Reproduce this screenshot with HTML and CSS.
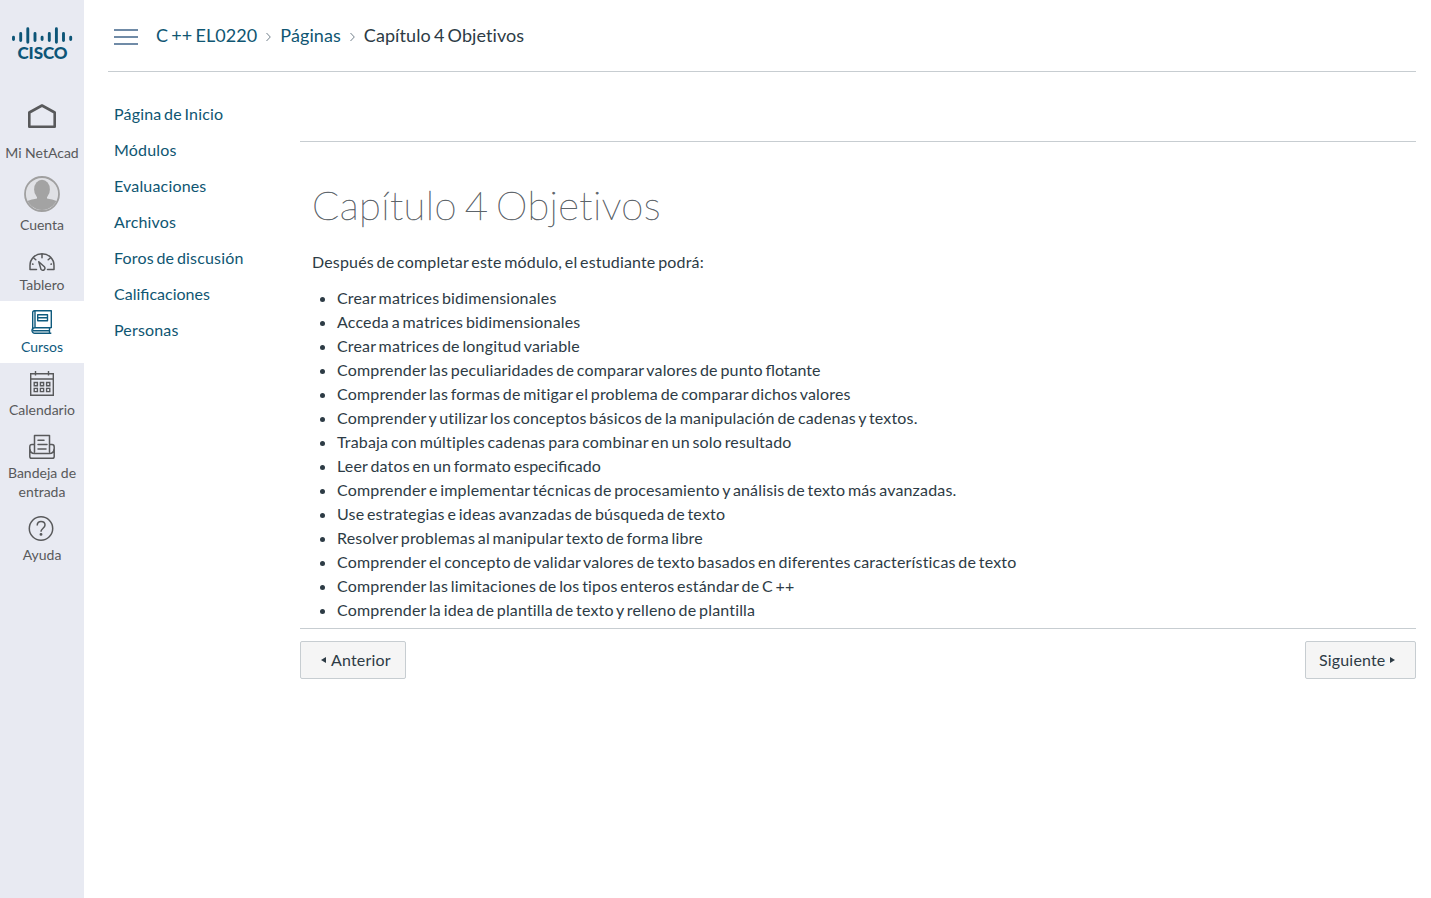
FILE: index.html
```html
<!DOCTYPE html>
<html lang="es">
<head>
<meta charset="utf-8">
<title>Capítulo 4 Objetivos</title>
<link rel="stylesheet" href="styles.css">
</head>
<body>
<div class="app">
  <nav class="rail">
    <a class="brand">
      <svg width="84" height="60" viewBox="0 10 84 60" role="img" aria-label="Cisco">
        <g stroke="#0d5577" stroke-width="2.900" stroke-linecap="round">
          <path d="M13.500 37.300v2.200M20.700 33.500v7M27.800 28.700v13.500M35 33.500v7M42.100 37.300v2.200M49.300 33.500v7M56.400 28.700v13.500M63.500 33.500v7M70.700 37.300v2.200"/>
        </g>
        <text class="brand-name" x="17.500" y="58.500" textLength="50" lengthAdjust="spacing">CISCO</text>
      </svg>
    </a>
    <a class="item home">
      <svg width="30" height="26" viewBox="0 0 30 26" fill="none" stroke="#58595b" stroke-width="2.600" stroke-linejoin="round"><path d="M2.300 9.500 15 2.500l12.700 7v14.200H2.300z"/></svg>
      <span>Mi NetAcad</span>
    </a>
    <a class="item account">
      <svg width="36" height="36" viewBox="0 0 36 36">
        <clipPath id="disc"><circle cx="18" cy="18" r="16"/></clipPath>
        <circle cx="18" cy="18" r="17" fill="#e0e1e5" stroke="#a0a0a0" stroke-width="1.800"/>
        <g fill="#a3a3a3" clip-path="url(#disc)"><ellipse cx="18" cy="13.400" rx="7.900" ry="9.600"/><path d="M13 19h10v3.500c3 1 10 1 13 5.500v8H0v-8c3-4.500 10-4.500 13-5.500z"/></g>
      </svg>
      <span>Cuenta</span>
    </a>
    <a class="item">
      <svg width="26" height="26" viewBox="0 -2 26 26" fill="none" stroke="#58595b" stroke-width="1.500" stroke-linecap="round" stroke-linejoin="round"><path d="M7.500 21.500H1v-4a12 11.800 0 0 1 24 0v4h-6.500M13 6.200v3.500M5.300 10.500l1.500 1.300M20.700 10.500l-1.500 1.300M3.500 16l.5.200M22.500 16l-.5.200M9.800 13.800l5.600 5c1.900 2.200-1.500 5-3.400 2.600z"/></svg>
      <span>Tablero</span>
    </a>
    <a class="item active">
      <svg width="26" height="26" viewBox="0 0 26 26" fill="none" stroke="#0f5a7d" stroke-width="1.400" stroke-linejoin="round"><path d="M3.700 21.500V3.500Q3.700 1.700 5.500 1.700H22.300V19M22.300 18.700H5.800a2.800 2.800 0 0 0 0 5.600H22.300M6 1.700V18.700M4 21.700H21M20.500 19v5M8.700 5.700h9.800v6H8.700zM9 8.700h9.500"/></svg>
      <span>Cursos</span>
    </a>
    <a class="item">
      <svg width="26" height="26" viewBox="0 0 26 26" fill="none" stroke="#58595b" stroke-width="1.400"><path d="M1.700 2.800h22.600v21.500H1.700zM2 8h22M6.500 0v4.500M19.500 0v4.500M5.200 11.500h3.200v3.200H5.200zM11.400 11.500h3.200v3.200h-3.200zM17.600 11.500h3.200v3.200h-3.200zM5.200 17.400h3.200v3.200H5.200zM11.400 17.400h3.200v3.200h-3.200zM17.600 17.400h3.200v3.200h-3.200z"/></svg>
      <span>Calendario</span>
    </a>
    <a class="item">
      <svg width="26" height="26" viewBox="0 0 26 26" fill="none" stroke="#58595b" stroke-width="1.500" stroke-linecap="round" stroke-linejoin="round"><path d="M5.500 18V1.500h15V18M5.300 10.500H3Q.8 10.500.8 13v9.500q0 1.800 1.800 1.800h20.800q1.800 0 1.800-1.800V13q0-2.500-2.200-2.500h-2.300M1 15q.2 4.500 4.500 4.500h15Q24.800 19.500 25 15M9 6.200h6M9 10.600h9M9 15h8"/></svg>
      <span>Bandeja de<br>entrada</span>
    </a>
    <a class="item help">
      <svg width="26" height="26" viewBox="0 0 26 26" fill="none" stroke="#58595b" stroke-width="1.500"><circle cx="13" cy="12.500" r="11.700"/><path d="M9.200 9.400C9.200 6.600 10.900 5.400 13 5.400s4 1.300 4 3.600c0 3.200-4 3.300-4 6.800"/><circle cx="13" cy="18.400" r=".7" fill="#58595b"/></svg>
      <span>Ayuda</span>
    </a>
  </nav>
  <div class="page">
    <header class="topbar">
      <svg class="burger" width="24" height="16" viewBox="0 0 24 16" stroke="#41658a" stroke-width="1.700"><path d="M0 1h24M0 8h24M0 15h24"/></svg>
      <div class="crumbs">
        <a>C ++ EL0220</a>
        <svg width="7" height="10" viewBox="0 0 7 10"><path d="M1.500 1 5.300 5 1.500 9"/></svg>
        <a>Páginas</a>
        <svg width="7" height="10" viewBox="0 0 7 10"><path d="M1.500 1 5.300 5 1.500 9"/></svg>
        <span>Capítulo 4 Objetivos</span>
      </div>
    </header>
    <div class="columns">
      <nav class="course-nav">
        <a>Página de Inicio</a><a>Módulos</a><a>Evaluaciones</a><a>Archivos</a><a>Foros de discusión</a><a class="liga">Calificaciones</a><a>Personas</a>
      </nav>
      <main class="content">
        <article class="article">
          <h1>Capítulo 4 Objetivos</h1>
          <p>Después de completar este módulo, el estudiante podrá:</p>
          <ul>
            <li>Crear matrices bidimensionales</li>
            <li>Acceda a matrices bidimensionales</li>
            <li>Crear matrices de longitud variable</li>
            <li>Comprender las peculiaridades de comparar valores de punto <span class="liga">flotante</span></li>
            <li>Comprender las formas de mitigar el problema de comparar dichos valores</li>
            <li>Comprender y utilizar los conceptos básicos de la manipulación de cadenas y textos.</li>
            <li>Trabaja con múltiples cadenas para combinar en un solo resultado</li>
            <li>Leer datos en un formato <span class="liga">especificado</span></li>
            <li>Comprender e implementar técnicas de procesamiento y análisis de texto más avanzadas.</li>
            <li>Use estrategias e ideas avanzadas de búsqueda de texto</li>
            <li>Resolver problemas al manipular texto de forma libre</li>
            <li>Comprender el concepto de validar valores de texto basados en diferentes características de texto</li>
            <li>Comprender las limitaciones de los tipos enteros estándar de C ++</li>
            <li>Comprender la idea de plantilla de texto y relleno de plantilla</li>
          </ul>
        </article>
        <footer class="pager">
          <a class="btn prev"><svg width="5" height="6" viewBox="0 0 5 6"><path d="M5 0v6L0 3z"/></svg>Anterior</a>
          <a class="btn next">Siguiente<svg width="5" height="6" viewBox="0 0 5 6"><path d="M0 0v6l5-3z"/></svg></a>
        </footer>
      </main>
    </div>
  </div>
</div>
</body>
</html>
```
FILE: styles.css
```css
* { box-sizing: border-box; }
body { margin: 0; background: #fff; color: #2d3b45; font: 16px/24px Lato, sans-serif; font-variant-ligatures: none; }
.app { display: flex; min-height: 898px; }
.rail { width: 84px; flex: none; background: #e8eaf2; display: flex; flex-direction: column; }
.brand { height: 85px; padding-top: 10px; }
.brand svg { display: block; }
.brand-name { font: 900 17px Lato, sans-serif; fill: #0d5577; }
.item { display: flex; flex-direction: column; align-items: center; gap: 3px; padding: 8px 0 7px; font-size: 14px; line-height: 19px; text-align: center; color: #58595b; }
.item svg { display: block; flex: none; }
.home { height: 83px; padding-top: 18px; gap: 14px; }
.account { height: 70px; }
.active { height: 62px; margin-top: 1px; padding-bottom: 6px; gap: 2px; background: #fff; color: #0f5a7d; }
.rail .account + .item { height: 62px; }
.help svg { margin-right: 2px; }
.page { flex: 1; padding: 0 15px 0 24px; letter-spacing: 0.17px; word-spacing: -1.55px; }
.topbar { height: 72px; padding: 0 0 0 6px; border-bottom: 1px solid #c7cdd1; display: flex; align-items: center; gap: 18px; }
.burger { margin-top: 2px; }
.crumbs { display: flex; align-items: center; gap: 8px; margin-top: -2px; font-size: 18px; letter-spacing: 0.08px; }
.crumbs svg { margin-top: 5px; fill: none; stroke: #73818c; stroke-width: 1; }
.crumbs a, .course-nav a { color: #0f5672; }
.columns { display: flex; }
.course-nav { width: 192px; padding: 24px 0 0 6px; display: flex; flex-direction: column; }
.course-nav a { line-height: 36px; }
.content { flex: 1; padding-top: 69px; }
.article { border-top: 1px solid #c7cdd1; border-bottom: 1px solid #c7cdd1; padding: 32px 12px 6px; }
h1 { margin: 0 0 14px; font-size: 40px; line-height: 62px; font-weight: 200; letter-spacing: 0.42px; word-spacing: -4px; color: #5d646a; -webkit-text-stroke: 0.5px #5d646a; }
p { margin: 0 0 12px; }
ul { margin: 0; padding-left: 25px; }
.liga { font-variant-ligatures: normal; letter-spacing: 0; }
.pager { display: flex; justify-content: space-between; padding-top: 12px; }
.btn { height: 38px; border: 1px solid #c7cdd1; border-radius: 2px; background: #f5f5f5; display: flex; align-items: center; gap: 5px; }
.btn svg { fill: #2d3b45; }
.prev { width: 106px; padding: 0 14px 0 20px; }
.next { width: 111px; padding: 0 0 0 13px; }
```
